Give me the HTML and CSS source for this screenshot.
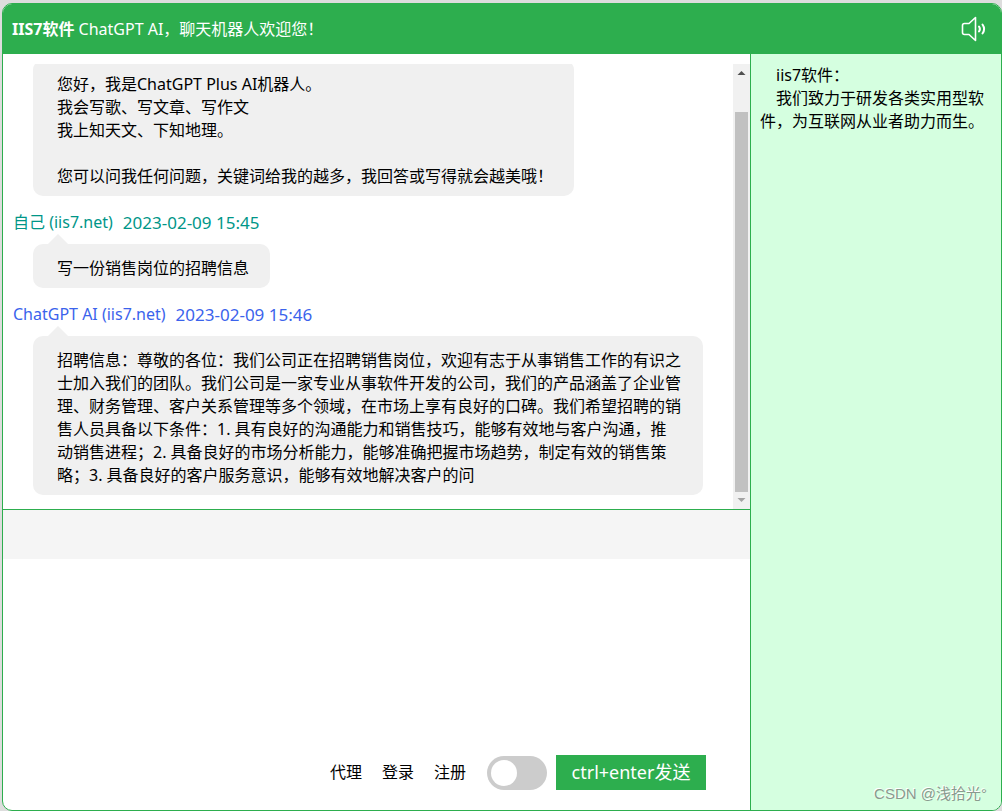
FILE: index.html
```html
<!DOCTYPE html>
<html lang="zh-CN">
<head>
<meta charset="utf-8">
<meta name="viewport" content="width=device-width, initial-scale=1">
<title>IIS7软件 ChatGPT AI</title>
<link rel="stylesheet" href="styles.css">
</head>
<body>
<div class="window">
  <header class="header">
    <h1 class="title"><strong>IIS7软件</strong> ChatGPT AI，聊天机器人欢迎您！</h1>
    <button class="sound" type="button" aria-label="声音">
      <svg width="26" height="26" viewBox="0 0 26 26" fill="none" stroke="#fff" stroke-width="1.6" stroke-linejoin="round" stroke-linecap="round">
        <path d="M14.5 1.5v23L8 18.500H3.500Q1.500 18.500 1.500 16.500V9.500Q1.500 7.500 3.500 7.500H8z"/>
        <path stroke-width="2" d="M18 10.500q1.800 2.500 0 5M21.500 8.500q3.200 4.500 0 9"/>
      </svg>
    </button>
  </header>
  <div class="content">
    <main class="chat">
      <section class="history">
        <div class="messages">
          <article class="message">
            <p class="bubble">您好，我是ChatGPT Plus AI机器人。<br>我会写歌、写文章、写作文<br>我上知天文、下知地理。<br><br>您可以问我任何问题，关键词给我的越多，我回答或写得就会越美哦！</p>
          </article>
          <article class="message">
            <div class="meta meta-self"><span>自己 (iis7.net)</span><time>2023-02-09 15:45</time></div>
            <p class="bubble">写一份销售岗位的招聘信息</p>
          </article>
          <article class="message">
            <div class="meta meta-bot"><span>ChatGPT AI (iis7.net)</span><time>2023-02-09 15:46</time></div>
            <p class="bubble">招聘信息：尊敬的各位：我们公司正在招聘销售岗位，欢迎有志于从事销售工作的有识之士加入我们的团队。我们公司是一家专业从事软件开发的公司，我们的产品涵盖了企业管理、财务管理、客户关系管理等多个领域，在市场上享有良好的口碑。我们希望招聘的销售人员具备以下条件：1. 具有良好的沟通能力和销售技巧，能够有效地与客户沟通，推动销售进程；2. 具备良好的市场分析能力，能够准确把握市场趋势，制定有效的销售策略；3. 具备良好的客户服务意识，能够有效地解决客户的问</p>
          </article>
        </div>
        <div class="scrollbar" aria-hidden="true">
          <svg class="arrow" width="17" height="17" viewBox="0 0 17 17"><path fill="#505050" d="M4.500 11h8L8.500 7z"/></svg>
          <div class="track"><div class="thumb"></div></div>
          <svg class="arrow" width="17" height="17" viewBox="0 0 17 17"><path fill="#a3a3a3" d="M4.500 6h8L8.500 10z"/></svg>
        </div>
      </section>
      <form class="composer">
        <div class="toolbar"></div>
        <textarea class="editor" aria-label="输入消息"></textarea>
        <div class="actions">
          <nav class="links"><a href="#">代理</a><a href="#">登录</a><a href="#">注册</a></nav>
          <input class="switch" type="checkbox" role="switch" aria-label="开关">
          <button class="send" type="button">ctrl+enter发送</button>
        </div>
      </form>
    </main>
    <aside class="side">
      <p>iis7软件：</p>
      <p>我们致力于研发各类实用型软件，为互联网从业者助力而生。</p>
    </aside>
  </div>
  <div class="watermark">CSDN @浅拾光°</div>
</div>
</body>
</html>
```

FILE: styles.css
```css
* {
  box-sizing: border-box;
}

body {
  margin: 0;
  padding: 3px 0 0 2px;
  height: 100vh;
  background: #ddd;
  color: #000;
  font: 16px/23px "Noto Sans", "Noto Sans CJK SC", sans-serif;
}

p,
h1 {
  margin: 0;
}

.window {
  position: relative;
  display: flex;
  flex-direction: column;
  height: 100%;
  border: 1px solid #2dae4e;
  border-radius: 10px;
  background: #fff;
  overflow: hidden;
}

.header {
  display: flex;
  align-items: center;
  justify-content: space-between;
  height: 50px;
  flex: none;
  padding: 0 14px 0 9px;
  background: #2dae4e;
  color: #fff;
}

.title {
  font-size: 16px;
  font-weight: 400;
}

.sound {
  display: flex;
  padding: 0;
  border: 0;
  background: none;
  cursor: pointer;
}

.content {
  display: flex;
  flex: 1;
  min-height: 0;
}

.chat {
  display: flex;
  flex-direction: column;
  flex: 1;
  min-width: 0;
}

.history {
  display: flex;
  flex: 1;
  min-height: 0;
  padding-top: 10px;
}

.messages {
  display: flex;
  flex-direction: column;
  justify-content: flex-end;
  gap: 15px;
  flex: 1;
  padding: 0 30px 14px 10px;
  overflow: hidden;
}

.message {
  display: flex;
  flex-direction: column;
  align-items: flex-start;
  flex: none;
  gap: 10px;
}

.meta {
  display: flex;
  gap: 10px;
}

.meta time {
  font-size: 17px;
}

.meta-self {
  color: #009688;
}

.meta-bot {
  color: #3b63ec;
}

.bubble {
  position: relative;
  margin-left: 20px;
  padding: 13px 21px 8px 24px;
  border-radius: 10px;
  background: #f0f0f0;
}

.bubble::before {
  content: "";
  position: absolute;
  top: -10px;
  left: 15px;
  border: 10px solid transparent;
  border-top: 0;
  border-bottom-color: #f0f0f0;
}

.scrollbar {
  display: flex;
  flex-direction: column;
  width: 17px;
  background: #f1f1f1;
}

.arrow {
  flex: none;
}

.track {
  display: flex;
  flex-direction: column;
  justify-content: flex-end;
  flex: 1;
  padding: 0 2px;
}

.thumb {
  height: 92.5%;
  background: #c1c1c1;
}

.composer {
  display: flex;
  flex-direction: column;
  height: 301px;
  border-top: 1px solid #2dae4e;
}

.toolbar {
  height: 49px;
  background: #f5f5f5;
}

.editor {
  flex: 1;
  padding: 10px;
  border: 0;
  outline: 0;
  resize: none;
  font: inherit;
}

.actions {
  display: flex;
  align-items: center;
  justify-content: flex-end;
  padding: 0 44px 20px 0;
}

.links {
  display: flex;
  gap: 20px;
  margin-right: 21px;
}

.links a {
  color: inherit;
  text-decoration: none;
}

.switch {
  appearance: none;
  display: flex;
  width: 60px;
  height: 34px;
  margin: 0 9px 0 0;
  padding: 4px;
  border-radius: 17px;
  background: #ccc;
  cursor: pointer;
}

.switch::before {
  content: "";
  width: 26px;
  height: 26px;
  border-radius: 50%;
  background: #fff;
}

.switch:checked {
  justify-content: flex-end;
  background: #2dae4e;
}

.send {
  width: 150px;
  height: 35px;
  padding: 0;
  border: 0;
  background: #2dae4e;
  color: #fff;
  font: inherit;
  font-size: 18px;
  cursor: pointer;
}

.side {
  width: 251px;
  padding: 10px 15px 0 9px;
  border-left: 1px solid #2dae4e;
  background: #d5ffe0;
}

.side p {
  text-indent: 16px;
}

.watermark {
  position: absolute;
  right: 14px;
  bottom: 5px;
  color: #8a9a8e;
  font-family: "Liberation Sans", "Noto Sans CJK SC", sans-serif;
  font-size: 15px;
  text-shadow: -1px -1px 0 #fff;
}
```
